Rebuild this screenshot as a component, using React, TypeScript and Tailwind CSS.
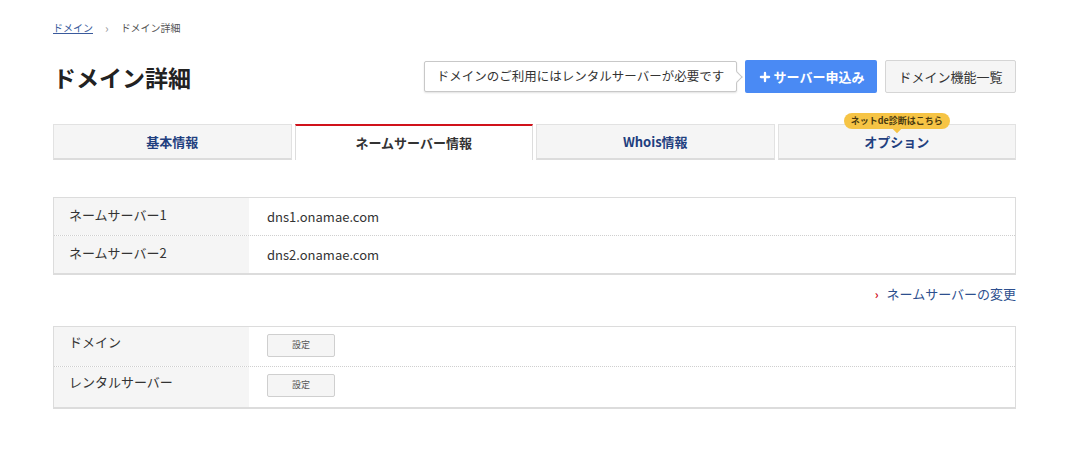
import { Plus } from "lucide-react";

const font = { fontFamily: '"Noto Sans CJK JP", "Noto Sans", sans-serif' };

function InfoRow({ label, value, h, last = false }: { label: string; value: string; h: string; last?: boolean }) {
  return (
    <div className={`flex ${h} ${last ? "" : "border-b border-dotted border-[#cfcfcf]"}`}>
      <div className="flex w-[195px] shrink-0 items-center bg-[#f5f5f5] pl-[15px] pb-[3px] text-[13px] text-[#333]">{label}</div>
      <div className="flex flex-1 items-center pl-[18px] text-[13px] text-[#333]">{value}</div>
    </div>
  );
}

export default function App() {
  const tabs = ["基本情報", "ネームサーバー情報", "Whois情報", "オプション"];

  return (
    <div className="w-[1087px] h-[451px] bg-white" style={font}>
      <div className="ml-[53px] w-[963px] pt-[20px]">
        {/* breadcrumb */}
        <div className="flex items-center gap-[12px] text-[10px] leading-[16px] text-[#555]">
          <a className="text-[#3a5a9c] underline">ドメイン</a>
          <span className="text-[12px] text-[#999]">›</span>
          <span>ドメイン詳細</span>
        </div>

        {/* header */}
        <div className="mt-[24px] flex items-center justify-between">
          <h1 className="text-[23px] font-bold text-[#222] leading-[30px]">ドメイン詳細</h1>
          <div className="flex items-center">
            <div className="relative flex h-[31px] w-[313px] items-center justify-center rounded-[2px] border border-[#c8c8c8] bg-white text-[12.5px] text-[#333] shadow-[0_1px_2px_rgba(0,0,0,0.12)]">
              ドメインのご利用にはレンタルサーバーが必要です
              <span className="absolute right-[-5px] top-1/2 h-[8px] w-[8px] -translate-y-1/2 rotate-45 border-r border-t border-[#c8c8c8] bg-white" />
            </div>
            <button className="ml-[8px] flex h-[33px] w-[132px] items-center justify-center gap-[2px] rounded-[2px] bg-[#4a8af4] text-[13px] font-bold text-white">
              <Plus size={14} strokeWidth={4} />
              サーバー申込み
            </button>
            <button className="ml-[8px] flex h-[33px] w-[131px] items-center justify-center rounded-[2px] border border-[#d5d5d5] bg-[#f5f5f5] text-[13px] text-[#333]">
              ドメイン機能一覧
            </button>
          </div>
        </div>

        {/* tabs */}
        <div className="mt-[31px] grid grid-cols-4 gap-[3px]">
          {tabs.map((t, i) => {
            const active = i === 1;
            return (
              <div
                key={t}
                className={`relative flex h-[36px] items-center justify-center text-[13px] font-bold ${
                  active
                    ? "border-x border-t-2 border-x-[#ddd] border-t-[#d0121b] bg-white text-[#333]"
                    : "border border-[#e2e2e2] border-b-2 border-b-[#dcdcdc] bg-[#f5f5f5] text-[#1f3f7f]"
                }`}
              >
                {t}
                {i === 3 && (
                  <span className="absolute left-1/2 top-[-12px] -translate-x-1/2 whitespace-nowrap rounded-full bg-[#f6c445] px-[7px] text-[9px] leading-[16px] font-bold text-[#4a3a10]">
                    ネットde診断はこちら
                    <span className="absolute bottom-[-3px] left-1/2 h-[6px] w-[6px] -translate-x-1/2 rotate-45 bg-[#f6c445]" />
                  </span>
                )}
              </div>
            );
          })}
        </div>

        {/* name servers */}
        <div className="mt-[37px] border border-[#dcdcdc] border-b-2">
          <InfoRow label="ネームサーバー1" value="dns1.onamae.com" h="h-[38px]" />
          <InfoRow label="ネームサーバー2" value="dns2.onamae.com" h="h-[37px]" last />
        </div>
        <div className="mt-[9px] flex justify-end">
          <a className="flex items-center gap-[8px] text-[13px] text-[#2d4f8e]">
            <span className="text-[12px] font-bold text-[#d0121b]">›</span>
            ネームサーバーの変更
          </a>
        </div>

        {/* settings */}
        <div className="mt-[22px] border border-[#dcdcdc] border-b-2">
          {["ドメイン", "レンタルサーバー"].map((l, i) => (
            <div key={l} className={`flex h-[40px] ${i === 0 ? "border-b border-dotted border-[#cfcfcf]" : ""}`}>
              <div className="w-[195px] shrink-0 bg-[#f5f5f5] pl-[15px] pt-[5px] text-[13px] text-[#333]">{l}</div>
              <div className="flex-1 pl-[18px] pt-[7px]">
                <button className="flex h-[23px] w-[68px] items-center justify-center rounded-[2px] border border-[#cfcfcf] bg-[#f5f5f5] text-[9px] text-[#555]">
                  設定
                </button>
              </div>
            </div>
          ))}
        </div>
      </div>
    </div>
  );
}
